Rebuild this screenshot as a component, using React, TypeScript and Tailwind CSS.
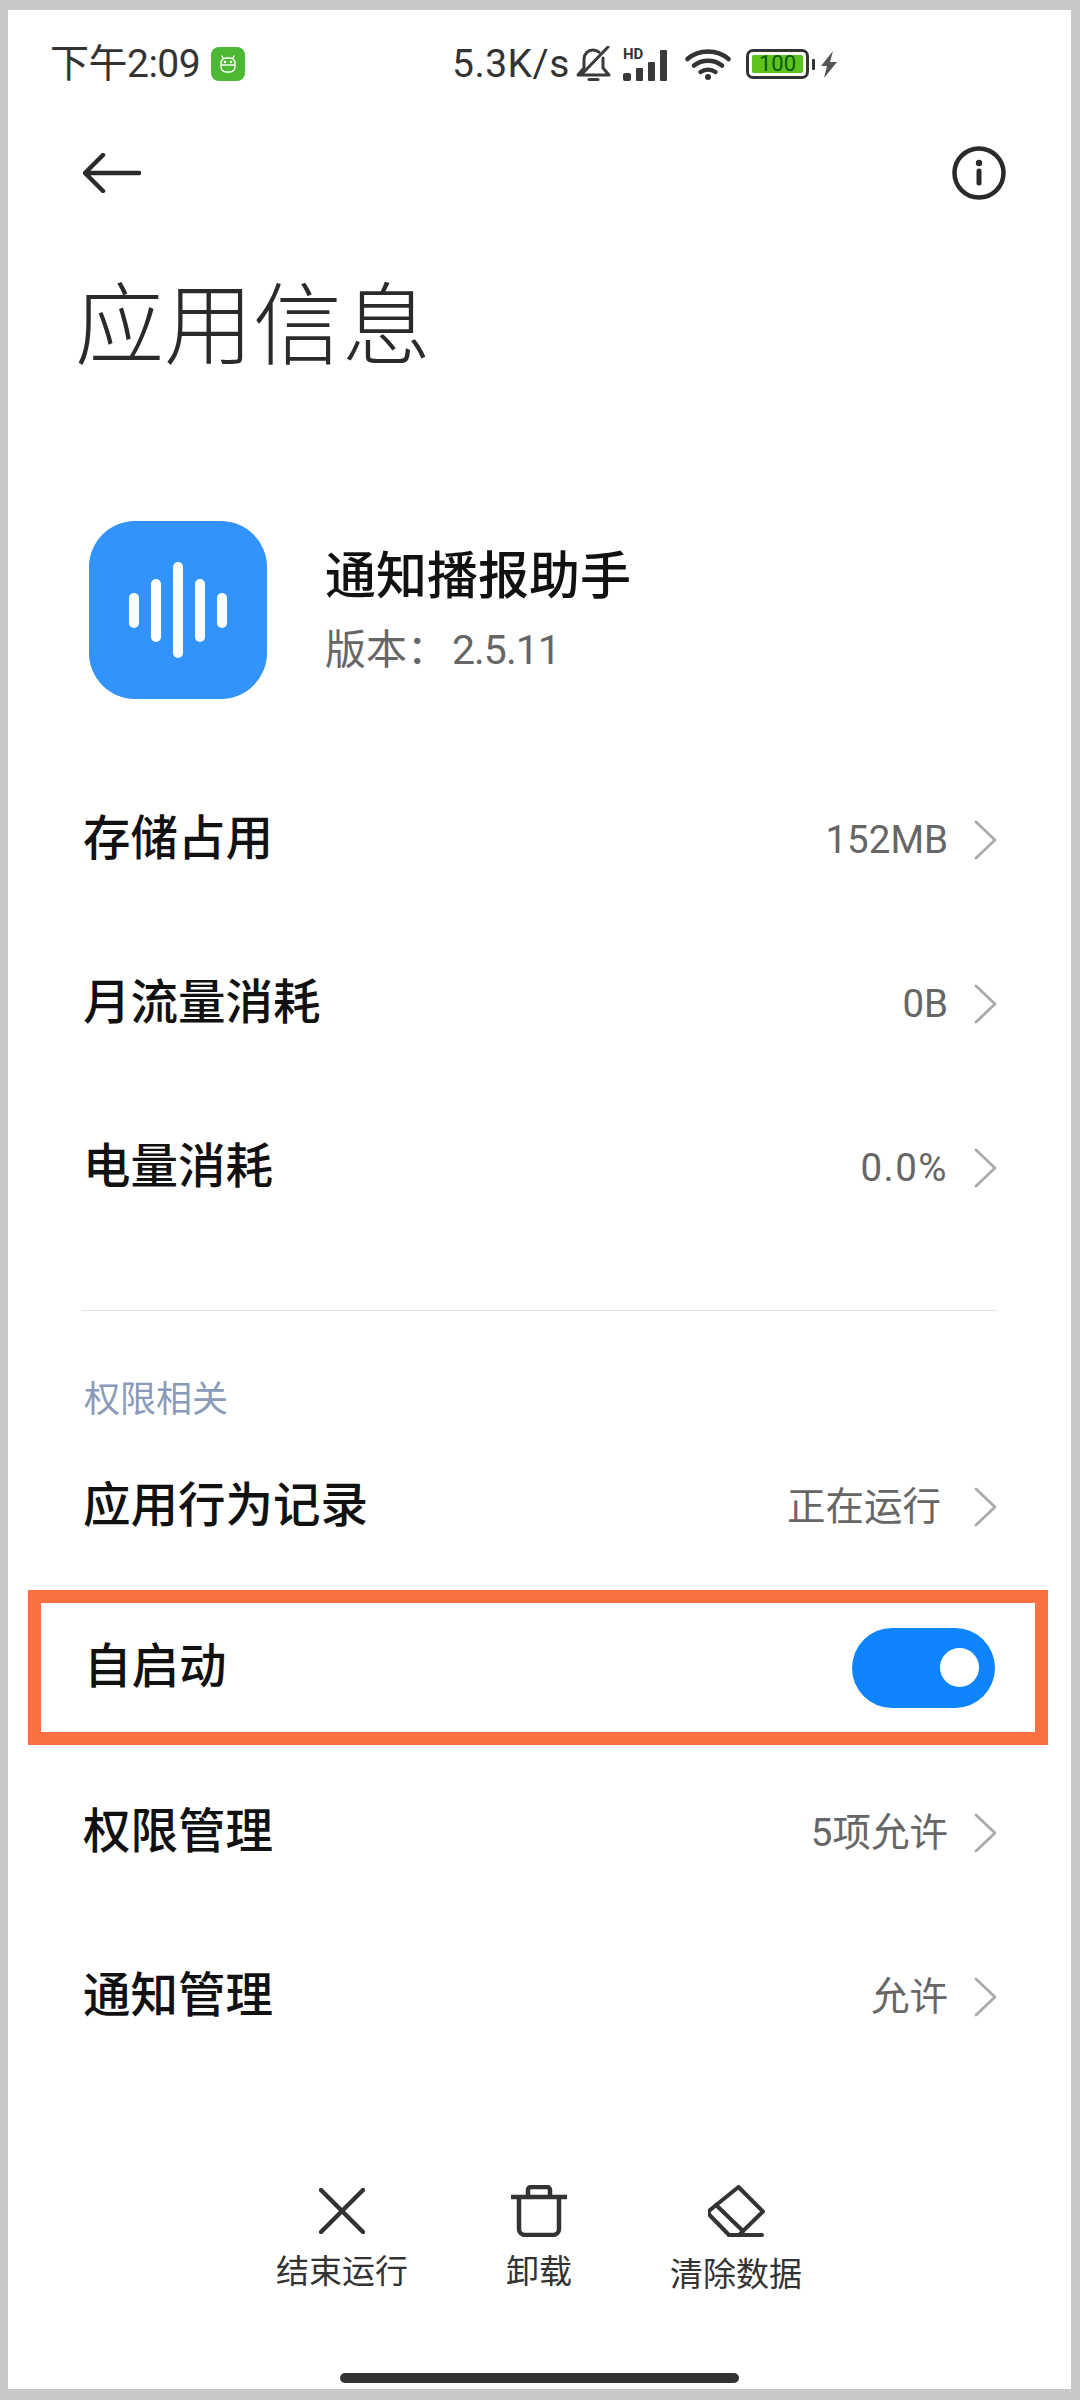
import React from 'react';

const SANS = "font-['Roboto','Noto_Sans_CJK_SC',sans-serif]";

const StatusBar = () => (
  <div className="flex h-[108px] items-center pl-[42px] text-[#333] text-[39px] leading-none">
    <span className="w-[161px] whitespace-nowrap tracking-[-0.5px]">下午2:09</span>
    <div className="flex h-[34px] w-[34px] items-center justify-center rounded-[8px] bg-[#4db833]">
      <svg width="20" height="20" viewBox="0 0 20 20" fill="none" stroke="#fff" strokeWidth="1.4">
        <path d="M5 4 4 2M15 4l1-2" strokeLinecap="round" />
        <rect x="3" y="4" width="14" height="14" rx="5" />
        <path d="M3 11h14" />
        <circle cx="7" cy="8" r="0.6" fill="#fff" />
        <circle cx="13" cy="8" r="0.6" fill="#fff" />
      </svg>
    </div>
    <span className="ml-[207px] w-[124px] whitespace-nowrap tracking-[0.5px]">5.3K/s</span>
    {/* bell off */}
    <svg width="35" height="36" viewBox="0 0 35 36" fill="none" stroke="#3a3a3a" strokeWidth="3" strokeLinecap="round" strokeLinejoin="round">
      <path d="M8 21V13c0-5 4-9 9-9 2.500 0 4.500.8 6 2.200M27 12v10l6 7H2l6-7" />
      <path d="M32 1 6 28" />
      <path d="M13 33.500h9" />
    </svg>
    <div className="relative ml-[12px] h-[33px] w-[47px]">
      <span className="absolute left-0 top-[-1px] text-[15px] font-bold leading-[15px]">HD</span>
      <div className="absolute bottom-0 left-0 flex items-end gap-[5px]">
        <div className="h-[8px] w-[8px] rounded-[2px] bg-[#3a3a3a]" />
        <div className="h-[13px] w-[7px] rounded-[1px] bg-[#3a3a3a]" />
        <div className="h-[19px] w-[7px] rounded-[1px] bg-[#3a3a3a]" />
        <div className="h-[31px] w-[7px] rounded-[1px] bg-[#3a3a3a]" />
      </div>
    </div>
    <svg className="ml-[15px]" width="46" height="33" viewBox="0 0 46 33" fill="none" stroke="#333" strokeWidth="4.500" strokeLinecap="round">
      <path d="M2.500 11C14 1 32 1 43.500 11" />
      <path d="M9 17.500C17 11 29 11 37 17.500" />
      <path d="M15.500 24c4.500-3 10.500-3 15 0" />
      <circle cx="23" cy="29" r="3" fill="#333" stroke="none" />
    </svg>
    <div className="ml-[15px] flex h-[30px] w-[63px] items-center justify-center rounded-[7px] border-[3px] border-[#333] p-[3px]">
      <div className="flex h-full w-full items-center justify-center rounded-[2px] bg-[#5cc21c] text-[22px] leading-none text-[#0d5a0d]">100</div>
    </div>
    <div className="ml-[3px] h-[11px] w-[3px] rounded-[1px] bg-[#333]" />
    <svg className="ml-[5px]" width="18" height="27" viewBox="0 0 18 27" fill="#555">
      <path d="M13 0 1 15h6l-3 12L17 11h-7z" />
    </svg>
  </div>
);

const Header = () => (
  <div className="flex h-[110px] items-center justify-between pl-[75px] pr-[65px]">
    <svg width="58" height="40" viewBox="0 0 58 40" fill="none" stroke="#2a2a2a" strokeWidth="4.500" strokeLinecap="round" strokeLinejoin="round">
      <path d="M56 20H3M20 2 2 20l18 18" />
    </svg>
    <svg width="54" height="54" viewBox="0 0 54 54" fill="none" stroke="#2a2a2a" strokeWidth="4.500" strokeLinecap="round">
      <circle cx="27" cy="27" r="24.500" />
      <path d="M27 25v12" strokeWidth="5" />
      <circle cx="27" cy="17" r="3.200" fill="#2a2a2a" stroke="none" />
    </svg>
  </div>
);

const AppIcon = () => (
  <div className="flex h-[178px] w-[178px] items-center justify-center gap-[11.500px] rounded-[46px] bg-[#3293fb]">
    <div className="h-[35px] w-[10.500px] rounded-full bg-white" />
    <div className="h-[63px] w-[10.500px] rounded-full bg-white" />
    <div className="h-[96px] w-[10.500px] rounded-full bg-white" />
    <div className="h-[63px] w-[10.500px] rounded-full bg-white" />
    <div className="h-[35px] w-[10.500px] rounded-full bg-white" />
  </div>
);

interface RowProps {
  label: string;
  value: string;
  valueClass?: string;
}

const Row: React.FC<RowProps> = ({ label, value, valueClass = '' }) => (
  <div className="flex h-[164px] items-center justify-between pl-[75px] pr-[74px]">
    <span className="text-[47.500px] font-medium leading-none text-[#111]">{label}</span>
    <div className="flex items-center gap-[26px]">
      <span className={`text-[38.500px] leading-none text-[#666] ${valueClass}`}>{value}</span>
      <svg width="23" height="40" viewBox="0 0 23 40" fill="none" stroke="#aaaaaa" strokeWidth="2.800" strokeLinecap="round" strokeLinejoin="round">
        <path d="M2 2 21 20 2 38" />
      </svg>
    </div>
  </div>
);

interface ActionProps {
  label: string;
  width: string;
  labelOffset?: string;
  children: React.ReactNode;
}

const Action: React.FC<ActionProps> = ({ label, width, labelOffset = 'mt-[18px]', children }) => (
  <div className={`flex flex-col items-center ${width}`}>
    <div className="flex h-[52px] items-center justify-center">{children}</div>
    <span className={`${labelOffset} whitespace-nowrap text-[33px] leading-none text-[#333]`}>{label}</span>
  </div>
);

export default function App() {
  return (
    <div className={`h-[2400px] w-[1080px] bg-[#c8c8c8] pb-[11px] pl-[8px] pr-[9px] pt-[10px] ${SANS}`}>
      <div className="flex h-full flex-col bg-white">
        <StatusBar />
        <Header />

        <h1 className="mt-[44px] h-[110px] pl-[67px] text-[89px] font-light leading-[110px] text-[#2a2a2a]">应用信息</h1>

        <div className="mt-[139px] flex items-center pl-[81px]">
          <AppIcon />
          <div className="ml-[58px] flex flex-col">
            <span className="text-[51px] font-medium leading-[56px] text-[#111]">通知播报助手</span>
            <span className="mt-[23px] whitespace-nowrap text-[41px] leading-[44px] text-[#666]">
              版本：<span className="ml-[4px] tracking-[-1px]">2.5.11</span>
            </span>
          </div>
        </div>

        <div className="mt-[57px] pt-[2px]">
          <Row label="存储占用" value="152MB" />
          <Row label="月流量消耗" value="0B" />
          <Row label="电量消耗" value="0.0%" valueClass="tracking-[1.500px]" />
        </div>

        <div className="mx-[74px] mt-[60px] h-[1px] bg-[#e4e4e4]" />
        <div className="mt-[71px] pl-[76px] text-[36px] leading-[36px] text-[#8a9abb]">权限相关</div>

        <div className="mt-[7px]">
          <Row label="应用行为记录" value="正在运行" valueClass="mr-[7px]" />
        </div>

        <div className="ml-[20px] mr-[23px] mt-[1px] flex h-[155px] items-center justify-between border-[13px] border-[#fb7040] pl-[43px] pr-[40px]">
          <span className="pt-[1px] text-[47.500px] font-medium leading-none text-[#111]">自启动</span>
          <div className="flex h-[80px] w-[143px] items-center justify-end rounded-full bg-[#0e84ff] pr-[16px]">
            <div className="h-[39px] w-[39px] rounded-full bg-white" />
          </div>
        </div>

        <div className="mt-[6px]">
          <Row label="权限管理" value="5项允许" />
          <Row label="通知管理" value="允许" />
        </div>

        <div className="mt-[106px] flex items-start pl-[267px]">
          <Action label="结束运行" width="w-[134px]">
            <svg width="46" height="46" viewBox="0 0 46 46" fill="none" stroke="#333" strokeWidth="4.500" strokeLinecap="round">
              <path d="M2 2l42 42M44 2 2 44" />
            </svg>
          </Action>
          <Action label="卸载" width="w-[64px] ml-[98px]">
            <svg width="56" height="52" viewBox="0 0 56 52" fill="none" stroke="#333" strokeWidth="4.500" strokeLinejoin="round">
              <path d="M0 12h56" />
              <path d="M17 12V5a3 3 0 0 1 3-3h16a3 3 0 0 1 3 3v7" />
              <path d="M8 12v32a6 6 0 0 0 6 6h28a6 6 0 0 0 6-6V12" />
            </svg>
          </Action>
          <Action label="清除数据" width="w-[132px] ml-[99px]" labelOffset="mt-[21px]">
            <svg width="57" height="52" viewBox="0 0 57 52" fill="none" stroke="#333" strokeWidth="4" strokeLinejoin="round" strokeLinecap="round">
              <path d="M30.500 2 55 26.500 31 50H21L2 30.500a4 4 0 0 1 0-5.500z" />
              <path d="M8 20 35 46" />
              <path d="M21 50h33" />
            </svg>
          </Action>
        </div>

        <div className="mb-[6px] ml-[332px] mt-auto h-[10px] w-[399px] rounded-full bg-[#333]" />
      </div>
    </div>
  );
}
